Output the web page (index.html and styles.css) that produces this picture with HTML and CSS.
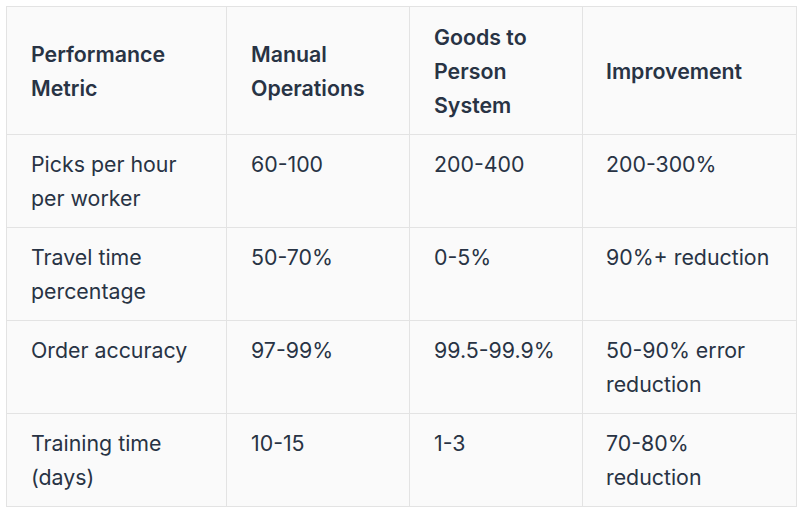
FILE: index.html
```html
<!DOCTYPE html>
<html lang="en">
<head>
<meta charset="utf-8">
<title>Performance table</title>
<link rel="stylesheet" href="styles.css">
</head>
<body>
<table class="metrics">
  <colgroup>
    <col class="c1"><col class="c2"><col class="c3"><col class="c4">
  </colgroup>
  <thead>
    <tr>
      <th>Performance Metric</th>
      <th>Manual Operations</th>
      <th>Goods to Person System</th>
      <th>Improvement</th>
    </tr>
  </thead>
  <tbody>
    <tr>
      <td>Picks per hour per worker</td>
      <td>60-100</td>
      <td>200-400</td>
      <td>200-300%</td>
    </tr>
    <tr>
      <td>Travel time percentage</td>
      <td>50-70%</td>
      <td>0-5%</td>
      <td>90%+ reduction</td>
    </tr>
    <tr>
      <td>Order accuracy</td>
      <td>97-99%</td>
      <td>99.5-99.9%</td>
      <td>50-90% error reduction</td>
    </tr>
    <tr>
      <td>Training time (days)</td>
      <td>10-15</td>
      <td>1-3</td>
      <td>70-80% reduction</td>
    </tr>
  </tbody>
</table>
</body>
</html>
```
FILE: styles.css
```css
html, body {
  margin: 0;
  background: #ffffff;
}
body {
  padding: 6px;
  font-family: Inter, "Noto Sans", sans-serif;
  color: #283344;
}
.metrics {
  border-collapse: collapse;
  table-layout: fixed;
  width: 790px;
  background: #fafafa;
  font-size: 21.33px;
  line-height: 34px;
}
.c1 { width: 220px; }
.c2 { width: 183px; }
.c3 { width: 173px; }
.c4 { width: 214px; }
.metrics th,
.metrics td {
  border: 1px solid #e3e3e3;
  padding: 12px 24px 12px 24px;
  text-align: left;
}
.metrics th {
  font-weight: 600;
  vertical-align: middle;
  padding-top: 12.5px;
  padding-bottom: 12.5px;
}
.metrics td {
  font-weight: 400;
  vertical-align: top;
}
.metrics th:last-child,
.metrics td:last-child {
  padding-left: 23px;
}
```
